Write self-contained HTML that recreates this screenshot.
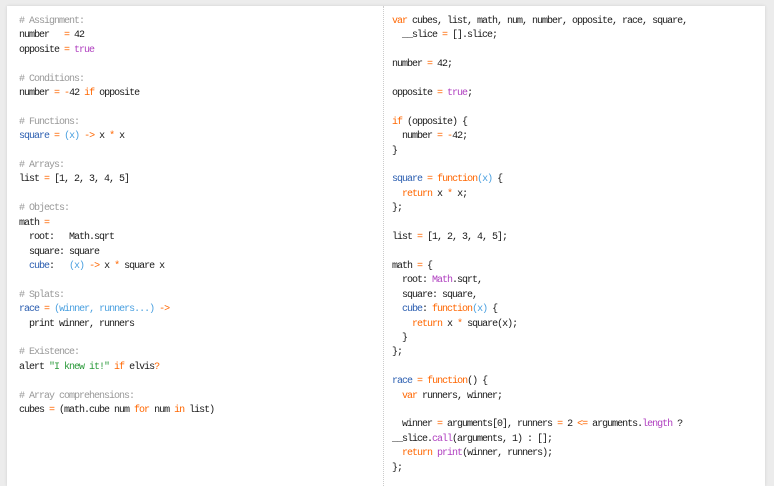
<!DOCTYPE html>
<html><head><meta charset="utf-8"><style>
html,body{margin:0;padding:0;width:774px;height:479px;overflow:hidden;background:#ececec;}
.panel{position:absolute;left:7px;top:6px;width:758px;height:480px;background:#fff;box-shadow:0 0 3px rgba(0,0,0,.12);}
.div{position:absolute;left:383px;top:6px;height:480px;border-left:1px dotted #ccc;}
pre{position:absolute;margin:0;font-family:"Liberation Mono",monospace;font-size:10px;letter-spacing:-1px;line-height:14.4px;color:#1a1a1a;}
.c{color:#999}.o{color:#f60}.k{color:#f60}.p{color:#b040c0}.b{color:#2a5db0}.l{color:#4aa0e0}.s{color:#2a9a3a}
</style></head><body>
<div class="panel"></div><div class="div"></div>
<pre style="left:19px;top:15px"><span class="c"># Assignment:</span>
number   <span class="o">=</span> 42
opposite <span class="o">=</span> <span class="p">true</span>

<span class="c"># Conditions:</span>
number <span class="o">=</span> <span class="o">-</span>42 <span class="k">if</span> opposite

<span class="c"># Functions:</span>
<span class="b">square</span> <span class="o">=</span> <span class="l">(x)</span> <span class="o">-&gt;</span> x <span class="o">*</span> x

<span class="c"># Arrays:</span>
list <span class="o">=</span> [1, 2, 3, 4, 5]

<span class="c"># Objects:</span>
math <span class="o">=</span>
  root:   Math.sqrt
  square: square
  <span class="b">cube</span>:   <span class="l">(x)</span> <span class="o">-&gt;</span> x <span class="o">*</span> square x

<span class="c"># Splats:</span>
<span class="b">race</span> <span class="o">=</span> <span class="l">(winner, runners...)</span> <span class="o">-&gt;</span>
  print winner, runners

<span class="c"># Existence:</span>
alert <span class="s">"I knew it!"</span> <span class="k">if</span> elvis<span class="o">?</span>

<span class="c"># Array comprehensions:</span>
cubes <span class="o">=</span> (math.cube num <span class="k">for</span> num <span class="k">in</span> list)</pre>
<pre style="left:392px;top:15px"><span class="k">var</span> cubes, list, math, num, number, opposite, race, square,
  __slice <span class="o">=</span> [].slice;

number <span class="o">=</span> 42;

opposite <span class="o">=</span> <span class="p">true</span>;

<span class="k">if</span> (opposite) {
  number <span class="o">=</span> <span class="o">-</span>42;
}

<span class="b">square</span> <span class="o">=</span> <span class="k">function</span><span class="l">(x)</span> {
  <span class="k">return</span> x <span class="o">*</span> x;
};

list <span class="o">=</span> [1, 2, 3, 4, 5];

math <span class="o">=</span> {
  root: <span class="p">Math</span>.sqrt,
  square: square,
  <span class="b">cube</span>: <span class="k">function</span><span class="l">(x)</span> {
    <span class="k">return</span> x <span class="o">*</span> square(x);
  }
};

<span class="b">race</span> <span class="o">=</span> <span class="k">function</span>() {
  <span class="k">var</span> runners, winner;

  winner <span class="o">=</span> arguments[0], runners <span class="o">=</span> 2 <span class="o">&lt;=</span> arguments.<span class="p">length</span> ?
__slice.<span class="p">call</span>(arguments, 1) : [];
  <span class="k">return</span> <span class="p">print</span>(winner, runners);
};</pre>
</body></html>
